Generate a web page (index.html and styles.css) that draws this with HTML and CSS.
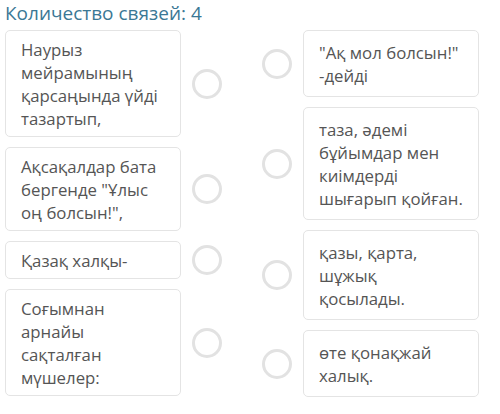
FILE: index.html
```html
<!DOCTYPE html>
<html lang="kk">
<head>
    <meta charset="UTF-8">
    <meta name="viewport" content="width=device-width, initial-scale=1.0">
    <title>Количество связей</title>
    <link rel="stylesheet" href="styles.css">
</head>
<body>
    <h1 class="title">Количество связей: 4</h1>

    <div class="board">
        <div class="column left">
            <div class="row">
                <div class="card">Наурыз мейрамының қарсаңында үйді тазартып,</div>
                <span class="dot"></span>
            </div>
            <div class="row">
                <div class="card">Ақсақалдар бата бергенде "Ұлыс оң болсын!",</div>
                <span class="dot"></span>
            </div>
            <div class="row">
                <div class="card">Қазақ халқы-</div>
                <span class="dot"></span>
            </div>
            <div class="row">
                <div class="card">Соғымнан арнайы сақталған мүшелер:</div>
                <span class="dot"></span>
            </div>
        </div>

        <div class="column right">
            <div class="row">
                <span class="dot"></span>
                <div class="card">"Ақ мол болсын!" -дейді</div>
            </div>
            <div class="row">
                <span class="dot"></span>
                <div class="card">таза, әдемі бұйымдар мен киімдерді шығарып қойған.</div>
            </div>
            <div class="row">
                <span class="dot"></span>
                <div class="card">қазы, қарта, шұжық қосылады.</div>
            </div>
            <div class="row">
                <span class="dot"></span>
                <div class="card">өте қонақжай халық.</div>
            </div>
        </div>
    </div>
</body>
</html>
```

FILE: styles.css
```css
body {
    margin: 0;
    padding: 0 5px;
    background: #fff;
    font-family: "Open Sans", Arial, sans-serif;
    color: #555;
}

.title {
    margin: 0;
    height: 30px;
    font-size: 19px;
    font-weight: normal;
    line-height: 27px;
    color: #3b7895;
}

.board {
    display: flex;
    gap: 40px;
}

.column {
    display: flex;
    flex-direction: column;
    gap: 10px;
    width: 217px;
}

.row {
    display: flex;
    align-items: center;
    gap: 11px;
}

.card {
    box-sizing: border-box;
    width: 176px;
    padding: 6.5px 13px 6.5px 15px;
    font-size: 16.8px;
    line-height: 23px;
    background: #fff;
    border: 1px solid #e4e4e4;
    border-radius: 5px;
}

.right .card {
    padding: 9.5px 13px 9.5px 15px;
}

.dot {
    flex: none;
    box-sizing: border-box;
    width: 30px;
    height: 30px;
    border: 3px solid #e2e2e2;
    border-radius: 50%;
}
```
